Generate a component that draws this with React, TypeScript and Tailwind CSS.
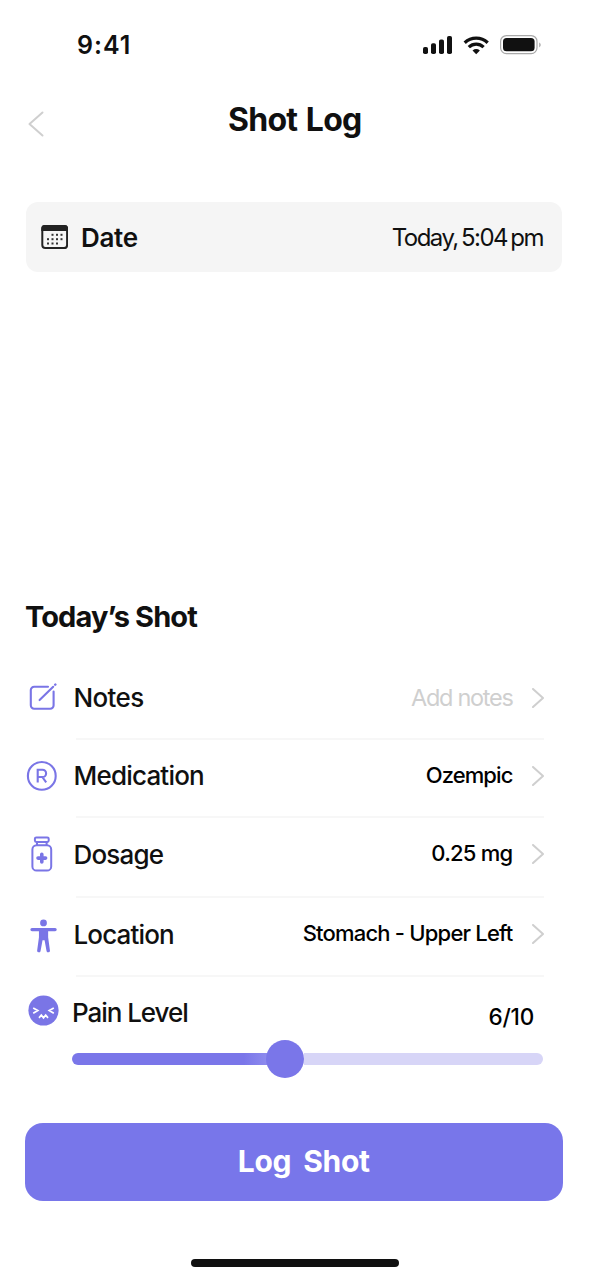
import type { ReactNode } from "react";

function Chevron() {
  return (
    <svg className="h-5 w-3 shrink-0" viewBox="0 0 12 20" fill="none" stroke="#cfcfcf" strokeWidth="2" strokeLinecap="round" strokeLinejoin="round">
      <path d="M1 1l10 9-10 9" />
    </svg>
  );
}

function StatusIcons() {
  return (
    <svg className="h-[22px] w-[120px]" viewBox="422 34 120 22">
      <g fill="#111">
        <rect x="423" y="47" width="5" height="7" rx="1.8" />
        <rect x="431" y="43.3" width="5" height="10.7" rx="1.8" />
        <rect x="439" y="39.5" width="5" height="14.5" rx="1.8" />
        <rect x="447" y="36" width="5" height="18" rx="1.8" />
        <path d="M476.2 54.2l-3.7-3.8q3.7-2.9 7.4 0z" />
        <rect x="503" y="37.9" width="31.6" height="13.4" rx="3.6" />
        <path d="M539.2 42.6c2 .9 2 3.9 0 4.8z" fill="#aaa" />
      </g>
      <g fill="none" stroke="#111" strokeWidth="3.3">
        <path d="M464.7 42.8c6.6-6.2 16.4-6.2 23 0" />
        <path d="M468.8 47.1c4.3-4 10.5-4 14.8 0" />
      </g>
      <rect x="500.6" y="35.6" width="36.4" height="18" rx="5.8" fill="none" stroke="#a9a9a9" strokeWidth="1.2" />
    </svg>
  );
}

function CalendarIcon() {
  const dots = [
    [52.5, 234.8], [57, 234.8], [61.5, 234.8],
    [48, 239.2], [52.5, 239.2], [57, 239.2], [61.5, 239.2],
    [48, 243.5], [52.5, 243.5], [57, 243.5],
  ];
  return (
    <svg className="h-6 w-[27px] shrink-0" viewBox="41 225 27 24">
      <rect x="42.3" y="226" width="24.8" height="22" rx="3" fill="none" stroke="#222" strokeWidth="2" />
      <path d="M41.3 231v-2.5a3.4 3.4 0 013.4-3.4h20a3.4 3.4 0 013.4 3.4v2.5z" fill="#222" />
      {dots.map(([x, y]) => (
        <rect key={`${x}-${y}`} x={x - 1} y={y - 1} width="2" height="2" fill="#333" />
      ))}
    </svg>
  );
}

function NotesIcon() {
  return (
    <svg className="h-[30px] w-[30px]" viewBox="27 682.5 30 30" fill="none" stroke="#7a75e6" strokeWidth="2.1" strokeLinecap="round" strokeLinejoin="round">
      <path d="M48 686.2H34.2a3.4 3.4 0 00-3.4 3.4v15.2a3.4 3.4 0 003.4 3.4h16a3.4 3.4 0 003.4-3.4V691" />
      <path d="M39.6 699.6L53.2 686.3" />
      <path d="M55.2 684.2l.2-.2" strokeWidth="2.4" />
    </svg>
  );
}

function MedicationIcon() {
  return (
    <svg className="h-8 w-8" viewBox="26 760 32 32" fill="none" stroke="#7a75e6" strokeWidth="2.1">
      <circle cx="41.8" cy="775.9" r="13.9" />
      <path d="M37.7 782.4v-12.6h4.8a3.5 3.5 0 010 7.2h-4.8M42.3 777l3.9 5.4" strokeWidth="2.1" />
    </svg>
  );
}

function DosageIcon() {
  return (
    <svg className="h-9 w-[22px]" viewBox="31 836.5 22 36" fill="none" stroke="#7a75e6" strokeWidth="2">
      <rect x="34.9" y="837.9" width="13.8" height="4.6" rx="1.4" />
      <path d="M37 842.6v2.8M46.6 842.6v2.8" />
      <rect x="32.4" y="845.8" width="18.8" height="25.3" rx="4.2" />
      <path d="M41.8 854.8v7.6M38 858.6h7.6" strokeWidth="3.6" strokeLinecap="round" />
    </svg>
  );
}

function LocationIcon() {
  return (
    <svg className="mt-[5px] ml-[3px] h-[36px] w-[30px]" viewBox="28.5 918 30 36" fill="#7a75e6">
      <circle cx="43.5" cy="922.5" r="3.5" />
      <path d="M31.6 927.6h23.9a1.7 1.7 0 010 3.4H48.3v6.2l1.9 14a1.8 1.8 0 01-3.5.5L44.6 940.4h-2.1L40.4 951.7a1.8 1.8 0 01-3.5-.5l1.9-14V931H31.6a1.7 1.7 0 010-3.4z" />
    </svg>
  );
}

function PainIcon() {
  return (
    <svg className="mb-[2px] ml-0.5 h-[31px] w-[31px]" viewBox="28 995.5 31 31">
      <circle cx="43.5" cy="1011" r="15.1" fill="#7a75e6" />
      <path d="M33.2 1008.4l4.6 2.6-4.6 2.7M53.8 1008.4l-4.6 2.6 4.6 2.7M39 1018.4l2.3-2.8 2.2 2.8 2.2-2.8 2.3 2.8" fill="none" stroke="#fff" strokeWidth="1.7" />
    </svg>
  );
}

type RowProps = {
  icon: ReactNode;
  label: string;
  labelClass: string;
  value: string;
  valueClass: string;
  className: string;
};

function Row({ icon, label, labelClass, value, valueClass, className }: RowProps) {
  return (
    <div className={`flex ${className}`}>
      <div className="flex w-8 shrink-0 items-center justify-center">{icon}</div>
      <div className="mr-[18px] ml-[15.5px] flex flex-1 items-center">
        <span className={`text-[26px] font-medium ${labelClass}`}>{label}</span>
        <span className={`mr-[19.5px] ml-auto ${valueClass}`}>{value}</span>
        <Chevron />
      </div>
    </div>
  );
}

const Divider = () => <div className="mr-[18px] ml-[50px] h-0.5 bg-[#f7f7f7]" />;

export default function App() {
  return (
    <div className="flex h-[1278px] w-[590px] flex-col overflow-hidden bg-white font-['Inter',sans-serif] text-[#101010]">
      <header className="flex h-[90px] items-center justify-between pr-12 pl-[77px]">
        <span className="mt-px text-[25px] font-semibold tracking-[1px]">9:41</span>
        <StatusIcons />
      </header>
      <div className="flex h-[60px] items-center pl-7">
        <svg className="mt-[7px] h-[26px] w-4" viewBox="0 0 16 26" fill="none" stroke="#cfcfcf" strokeWidth="2" strokeLinecap="round" strokeLinejoin="round">
          <path d="M14.5 1.5L1.5 13l13 11.5" />
        </svg>
        <h1 className="ml-[184px] text-[32px] font-bold tracking-[-0.75px] [word-spacing:1.8px]">Shot Log</h1>
      </div>
      <section className="mt-[52px] ml-[26px] flex h-[70px] w-[536px] items-center rounded-[12px] bg-[#f5f5f5] pr-[19px] pl-[15px]">
        <CalendarIcon />
        <span className="ml-[13px] text-[26px] font-semibold tracking-[-0.3px]">Date</span>
        <span className="mt-0.5 ml-auto text-[24px] tracking-[-1.55px] [word-spacing:-1.8px]">Today, 5:04 pm</span>
      </section>
      <main className="mt-[322px] flex flex-col pr-7 pl-[26px]">
        <h2 className="-ml-px h-[46px] self-start text-[29px] leading-[46px] font-bold tracking-[-0.88px]">Today’s Shot</h2>
        <Row className="mt-[18px] h-[80px]" icon={<NotesIcon />} label="Notes" labelClass="tracking-[-0.65px] mb-0.5" value="Add notes" valueClass="text-[23.5px] tracking-[-1.3px] text-[#cfcfcf] mb-px" />
        <Divider />
        <Row className="h-[76px] pb-[5px]" icon={<MedicationIcon />} label="Medication" labelClass="tracking-[-0.8px] mb-px" value="Ozempic" valueClass="text-[22px] tracking-[-0.9px] font-medium text-black mb-px" />
        <Divider />
        <Row className="h-[78px] pb-[6px]" icon={<DosageIcon />} label="Dosage" labelClass="tracking-[-0.8px] mt-px" value="0.25 mg" valueClass="text-[22px] tracking-[-0.75px] font-medium text-black mb-0.5" />
        <Divider />
        <Row className="h-[77px] pb-[6px]" icon={<LocationIcon />} label="Location" labelClass="tracking-[-0.85px] mt-0.5" value="Stomach - Upper Left" valueClass="text-[22px] tracking-[-0.8px] font-medium text-black mb-px" />
        <Divider />
        <div className="flex h-[69px] items-center">
          <PainIcon />
          <span className="mt-px ml-[13px] text-[26px] font-medium tracking-[-1.05px]">Pain Level</span>
          <span className="mt-[10px] mr-[28px] ml-auto text-[22.5px] font-medium tracking-[-0.2px] text-black">6/10</span>
        </div>
        <div className="mr-[19px] ml-[46px] flex h-[26px] items-center">
          <div className="h-3 w-[195px] rounded-l-full bg-linear-to-r from-[#7a76e9] from-88% to-[#8d8aee]" />
          <div className="-ml-px size-[38px] shrink-0 rounded-full bg-[#7a76e9]" />
          <div className="h-3 flex-1 rounded-r-full bg-[#d7d5f7]" />
        </div>
      </main>
      <button className="mt-[51px] ml-[25px] flex h-[78px] w-[537.5px] items-center justify-center rounded-[18px] bg-[#7876ea] pl-5 text-white">
        <span className="mb-0.5 text-[30px] font-[650] tracking-[-0.3px] whitespace-pre [word-spacing:-0.8px]">Log  Shot</span>
      </button>
      <div className="mt-[58px] ml-[191px] h-[7.5px] w-[208px] rounded-full bg-[#101010]" />
    </div>
  );
}
